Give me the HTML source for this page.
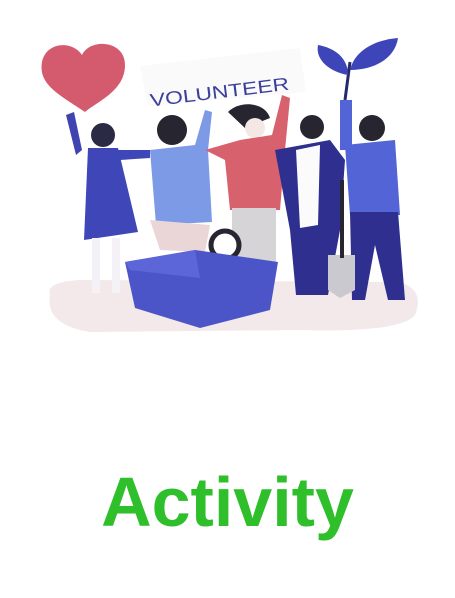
<!DOCTYPE html>
<html><head><style>
html,body{margin:0;padding:0;background:#fff;width:455px;height:598px;overflow:hidden}
svg{position:absolute;left:0;top:0}
.t{position:absolute;left:0;width:455px;top:462px;text-align:center;font:bold 70px "Liberation Sans",sans-serif;color:#2fbf2b;line-height:80px}
</style></head><body>
<svg width="455" height="598" viewBox="0 0 455 598">
<!-- ground -->
<path d="M50 295 Q45 282 80 280 L400 282 Q425 290 415 315 Q400 333 300 330 L90 332 Q45 325 50 295Z" fill="#f3e8ea"/>
<!-- banner -->
<path d="M140 66 L300 48 L306 92 L148 106Z" fill="#fafafb"/>
<text x="148" y="98" transform="rotate(-7 220 80)" font-family="Liberation Sans,sans-serif" font-size="18" fill="#3c3f9e" textLength="140" lengthAdjust="spacingAndGlyphs">VOLUNTEER</text>
<!-- heart -->
<path d="M85 112 C60 95 38 85 42 62 C46 42 72 40 82 55 C90 38 125 40 125 65 C125 90 100 100 85 112Z" fill="#d45b6e"/>
<!-- plant -->
<path d="M345 100 L350 62" stroke="#262a6a" stroke-width="3"/>
<path d="M348 75 C330 72 315 60 318 45 C335 48 348 58 348 75Z" fill="#3e45b8"/>
<path d="M350 70 C355 50 375 40 398 38 C395 58 375 70 350 70Z" fill="#3e45b8"/>
<!-- person 1 -->
<path d="M66 115 L74 112 L82 150 L76 155Z" fill="#3f44b0"/>
<circle cx="103" cy="135" r="12" fill="#2a2a45"/>
<path d="M88 148 L118 148 L138 232 L84 240Z" fill="#3f47b8"/>
<path d="M118 150 L150 150 L150 158 L120 160Z" fill="#3f47b8"/>
<rect x="92" y="238" width="8" height="55" fill="#f4f2f6"/><rect x="112" y="238" width="8" height="55" fill="#f4f2f6"/>
<!-- person 2 -->
<circle cx="172" cy="130" r="15" fill="#262530"/>
<path d="M150 150 L195 145 L205 110 L212 112 L208 150 L212 222 L156 225Z" fill="#7d9ae6"/>
<!-- person 3 -->
<path d="M228 112 C240 100 265 102 270 118 L245 128Z" fill="#262530"/>
<circle cx="255" cy="128" r="10" fill="#f4e8e4"/>
<path d="M205 150 L240 140 L272 135 L282 95 L290 98 L285 150 L280 210 L230 210 L225 160Z" fill="#d8616e"/>
<rect x="232" y="208" width="44" height="60" fill="#d6d4d6"/>
<!-- box -->
<path d="M150 220 L210 225 L205 252 L160 250Z" fill="#ead6d6"/>
<circle cx="225" cy="245" r="14" fill="#fff" stroke="#262530" stroke-width="5"/>
<path d="M125 262 L195 250 L278 262 L270 310 L200 328 L135 308Z" fill="#4c55c8"/>
<path d="M125 262 L195 250 L200 278 L130 270Z" fill="#5c66d8"/>
<!-- person 4 -->
<circle cx="312" cy="127" r="12" fill="#262530"/>
<path d="M275 150 L330 140 L345 160 L340 230 L328 295 L296 295 L290 230Z" fill="#2e2f8e"/>
<path d="M296 150 L320 145 L318 225 L300 228Z" fill="#fbfbfb"/>
<!-- person 5 -->
<rect x="340" y="100" width="12" height="50" fill="#5264d6"/>
<circle cx="372" cy="128" r="13" fill="#262530"/>
<path d="M345 145 L395 140 L400 215 L350 215Z" fill="#5264d6"/>
<path d="M350 212 L398 212 L405 300 L388 300 L375 245 L365 300 L352 300Z" fill="#2e2f8e"/>
<path d="M328 255 L355 255 L355 290 L340 298 L328 290Z" fill="#c9c9cf"/>
<rect x="340" y="180" width="4" height="78" fill="#262530"/>
</svg>
<div class="t">Activity</div>
</body></html>
